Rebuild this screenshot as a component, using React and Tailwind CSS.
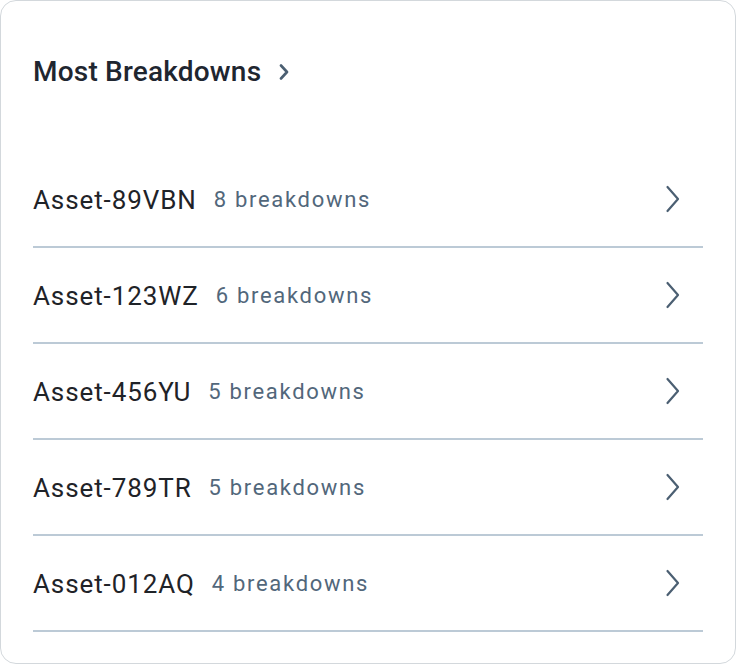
import React from "react";

const rows = [
  { name: "Asset-89VBN", count: "8 breakdowns" },
  { name: "Asset-123WZ", count: "6 breakdowns" },
  { name: "Asset-456YU", count: "5 breakdowns" },
  { name: "Asset-789TR", count: "5 breakdowns" },
  { name: "Asset-012AQ", count: "4 breakdowns" },
];

function Chevron() {
  return (
    <svg width="16" height="28" viewBox="0 0 16 28" fill="none" className="shrink-0">
      <path d="M2.5 2 L13 14 L2.5 26" stroke="#4b5f72" strokeWidth="2.2" strokeLinecap="round" strokeLinejoin="round" />
    </svg>
  );
}

export default function App() {
  return (
    <div className="w-[736px] h-[664px] bg-white" style={{ fontFamily: "Roboto, 'Noto Sans', sans-serif" }}>
      <div className="h-full rounded-2xl border border-[#d3d8dc] bg-white px-8 pt-[47px] pb-[31px] flex flex-col">
        <div className="h-12 flex items-center gap-[18px]">
          <span className="text-[28px] font-medium text-[#1f2630] leading-none tracking-[0.2px]">Most Breakdowns</span>
          <svg width="10" height="16" viewBox="0 0 10 16" fill="none">
            <path d="M2 1.5 L8 8 L2 14.5" stroke="#4b5f72" strokeWidth="2.6" strokeLinecap="round" strokeLinejoin="round" />
          </svg>
        </div>
        <div className="mt-[56px] flex flex-col">
          {rows.map((r) => (
            <div key={r.name} className="h-[96px] border-b-2 border-[#bccad6] flex items-center pr-[22px]">
              <span className="text-[26px] text-[#1f2328] tracking-[0.9px] translate-y-[1px]">{r.name}</span>
              <span className="ml-[17px] text-[22px] text-[#52677b] tracking-[1.7px]">{r.count}</span>
              <div className="flex-1" />
              <Chevron />
            </div>
          ))}
        </div>
      </div>
    </div>
  );
}
